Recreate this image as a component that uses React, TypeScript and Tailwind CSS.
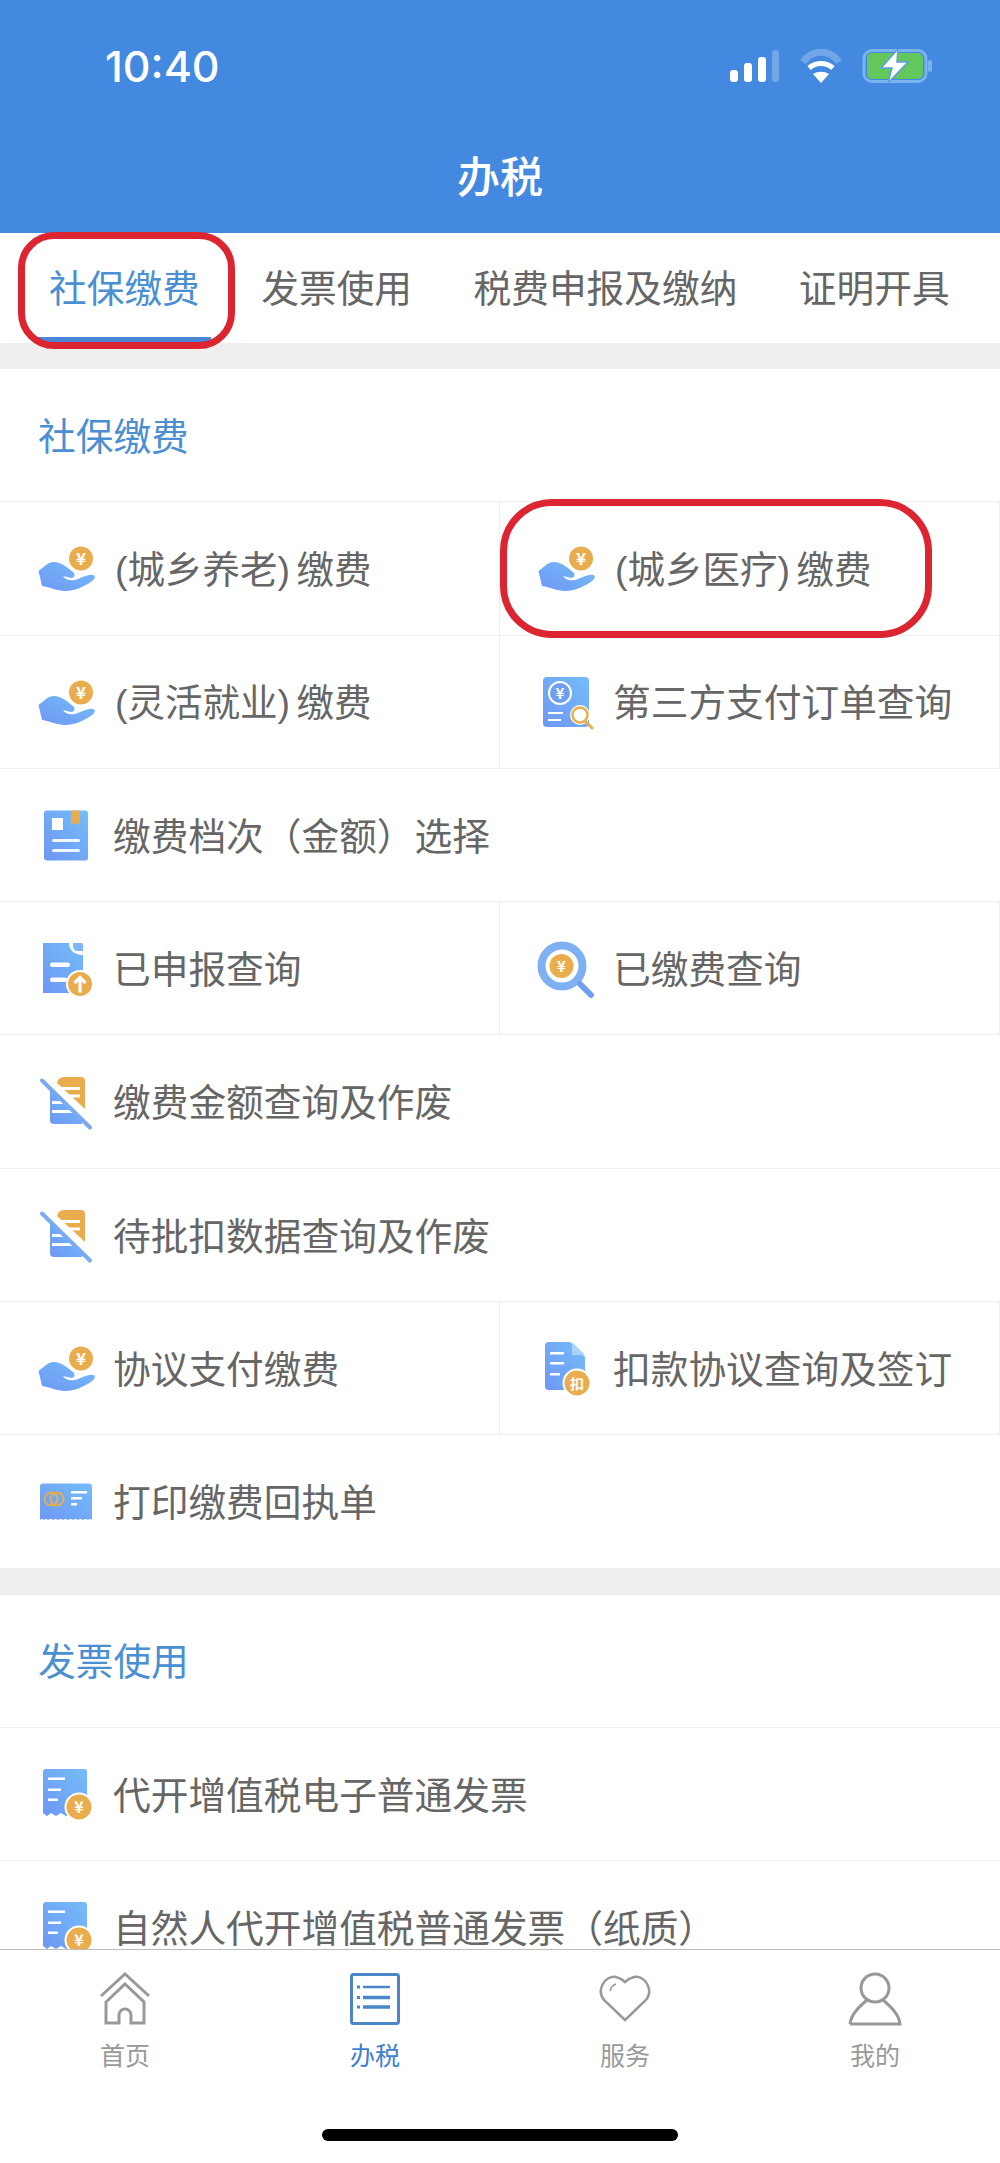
import type { ReactNode } from "react";

type IconName = "hand" | "form" | "thirdParty" | "upload" | "search" | "strike" | "deduct" | "ticket" | "receipt";

type Cell = { icon: IconName; label: string; circled?: boolean };

const TABS = ["社保缴费", "发票使用", "税费申报及缴纳", "证明开具"];

const SOCIAL_ROWS: Cell[][] = [
    [
        { icon: "hand", label: "(城乡养老) 缴费" },
        { icon: "hand", label: "(城乡医疗) 缴费", circled: true },
    ],
    [
        { icon: "hand", label: "(灵活就业) 缴费" },
        { icon: "thirdParty", label: "第三方支付订单查询" },
    ],
    [{ icon: "form", label: "缴费档次（金额）选择" }],
    [
        { icon: "upload", label: "已申报查询" },
        { icon: "search", label: "已缴费查询" },
    ],
    [{ icon: "strike", label: "缴费金额查询及作废" }],
    [{ icon: "strike", label: "待批扣数据查询及作废" }],
    [
        { icon: "hand", label: "协议支付缴费" },
        { icon: "deduct", label: "扣款协议查询及签订" },
    ],
    [{ icon: "ticket", label: "打印缴费回执单" }],
];

const INVOICE_ROWS: Cell[][] = [
    [{ icon: "receipt", label: "代开增值税电子普通发票" }],
    [{ icon: "receipt", label: "自然人代开增值税普通发票（纸质）" }],
];

const BLUE_FILL = "url(#serviceBlue)";
const ORANGE = "#e9ad4e";

function ServiceIcon({ name }: { name: IconName }) {
    let body: ReactNode = null;

    if (name === "hand") {
        body = (
            <>
                <circle cx="45" cy="20.5" r="12" fill={ORANGE} />
                <text x="45" y="26.5" textAnchor="middle" fontSize="17" fontWeight="700" fill="#fff">¥</text>
                <path
                    d="M2.5 33 C8 29 12 24 18 24 C25 24 32 30 37 34 C40 37 38 40 35 40 L27 38 C30 43 37 43 42 41 C47 39 53 36 57 37 C60 38 59 41 56 43 C48 49 38 53 29 53 C21 53 14 49 6 48 Z"
                    fill={BLUE_FILL}
                />
            </>
        );
    } else if (name === "form") {
        body = (
            <>
                <rect x="8" y="5.5" width="44" height="50" rx="3" fill={BLUE_FILL} />
                <path d="M35 5.5 H44 V20 L39.5 18 L35 20 Z" fill={ORANGE} />
                <rect x="16" y="13" width="11" height="12" fill="#fff" />
                <rect x="16" y="34" width="28" height="3" rx="1.5" fill="#fff" opacity="0.9" />
                <rect x="16" y="44" width="28" height="3" rx="1.5" fill="#fff" opacity="0.9" />
            </>
        );
    } else if (name === "thirdParty") {
        body = (
            <>
                <rect x="7" y="5" width="46" height="50" rx="4" fill={BLUE_FILL} />
                <circle cx="24" cy="21" r="11" fill="#6f9ff0" stroke="#fff" strokeWidth="2" />
                <text x="24" y="27" textAnchor="middle" fontSize="15" fontWeight="700" fill="#fff">¥</text>
                <rect x="12" y="40" width="15" height="2" fill="#fff" />
                <rect x="12" y="47" width="13" height="2" fill="#fff" />
                <circle cx="44" cy="43" r="10" fill="#fff" />
                <circle cx="44" cy="43" r="7.5" fill="#fff" stroke={ORANGE} strokeWidth="2.5" />
                <path d="M49 49 L56 56" stroke={ORANGE} strokeWidth="3" strokeLinecap="round" />
            </>
        );
    } else if (name === "upload") {
        body = (
            <>
                <path d="M7 5 H33 C33 12 38 17 47 17 V55 H7 Z" fill={BLUE_FILL} />
                <path d="M37 5 H45 Q47 5 47 7 V13 H42 Q37 13 37 8 Z" fill="#7fb6f8" />
                <rect x="14" y="24.5" width="20" height="4.5" rx="2.2" fill="#fff" />
                <rect x="14" y="39.5" width="17" height="4.5" rx="2.2" fill="#fff" />
                <circle cx="44" cy="46" r="14" fill="#fff" />
                <circle cx="44" cy="46" r="12" fill={ORANGE} />
                <path d="M44 54.5 V40 M38.5 45 L44 39.5 L49.5 45" stroke="#fff" strokeWidth="3.2" fill="none" />
            </>
        );
    } else if (name === "search") {
        body = (
            <>
                <circle cx="26" cy="28" r="20.5" fill="#fff" stroke="#7fb0f2" strokeWidth="8" />
                <circle cx="25.5" cy="28" r="12" fill={ORANGE} />
                <text x="25.5" y="34" textAnchor="middle" fontSize="15" fontWeight="700" fill="#fff">¥</text>
                <path d="M44 46 L55 57" stroke="#6f9ff0" strokeWidth="6" strokeLinecap="round" />
            </>
        );
    } else if (name === "strike") {
        body = (
            <>
                {/* upper half of the sheet, split off by the crossing line */}
                <path d="M21 11 Q22 5 28 5 H45 Q49 5 49 9 V37 Z" fill={ORANGE} />
                <rect x="20" y="15" width="24" height="3" fill="#fff" />
                <rect x="28" y="22.5" width="16" height="3" fill="#fff" />
                {/* lower half */}
                <path d="M14 16 L46 47 V52 H18 Q14 52 14 48 Z" fill={BLUE_FILL} />
                <rect x="16" y="29" width="18" height="3" fill="#fff" />
                <rect x="16" y="38" width="28" height="3" fill="#fff" />
                <path d="M6 8.5 L54 55.5" stroke="#7aaaf5" strokeWidth="4" strokeLinecap="round" />
            </>
        );
    } else if (name === "deduct") {
        body = (
            <>
                <path d="M13 4 H34 L49 19 V49 Q49 52 46 52 H13 Q9 52 9 48 V8 Q9 4 13 4 Z" fill={BLUE_FILL} />
                <path d="M36 4 L49 17 H36 Z" fill="#a9d3fb" />
                <rect x="14" y="14" width="14" height="2.5" fill="#fff" />
                <rect x="14" y="24" width="14" height="2.5" fill="#fff" />
                <rect x="14" y="35" width="10" height="2.5" fill="#fff" />
                <circle cx="41" cy="45" r="14.5" fill="#fff" />
                <circle cx="41" cy="45" r="12.5" fill={ORANGE} />
                <text x="41" y="50.5" textAnchor="middle" fontSize="14" fontWeight="700" fill="#fff">扣</text>
            </>
        );
    } else if (name === "ticket") {
        body = (
            <>
                <path
                    d="M7 11.5 H53 Q56 11.5 56 14.5 V48 Q54 46 52 48 Q50 46 47 48 Q45 46 42 48 Q40 46 37 48 Q35 46 32 48 Q30 46 27 48 Q25 46 22 48 Q20 46 17 48 Q15 46 12 48 Q10 46 8 48 Q6 46 4 48 V14.5 Q4 11.5 7 11.5 Z"
                    fill={BLUE_FILL}
                />
                <circle cx="15" cy="27" r="6.5" fill="none" stroke={ORANGE} strokeWidth="2" />
                <circle cx="21" cy="27" r="6.5" fill="none" stroke={ORANGE} strokeWidth="2" />
                <rect x="35" y="19" width="16" height="2.5" fill="#fff" />
                <rect x="35" y="25" width="11" height="2.5" fill="#fff" />
                <rect x="35" y="31" width="6" height="2.5" fill="#fff" />
            </>
        );
    } else if (name === "receipt") {
        body = (
            <>
                <path
                    d="M10 5 H48 Q51 5 51 8 V48 L30 52 L25 49 L20 52 L15 49 L11 52 L7 49 V8 Q7 5 10 5 Z"
                    fill={BLUE_FILL}
                />
                <rect x="12" y="13.5" width="17" height="2.5" fill="#fff" />
                <rect x="12" y="24.5" width="13" height="2.5" fill="#fff" />
                <rect x="12" y="34.5" width="10" height="2.5" fill="#fff" />
                <circle cx="43" cy="43" r="14.5" fill="#fff" />
                <circle cx="43" cy="43" r="12.5" fill={ORANGE} />
                <text x="43" y="49" textAnchor="middle" fontSize="16" fontWeight="700" fill="#fff">¥</text>
            </>
        );
    }

    return (
        <svg width="60" height="60" viewBox="0 0 60 60" className="shrink-0 font-['Noto_Sans_CJK_SC',sans-serif]">
            {body}
        </svg>
    );
}

function ServiceCell({ cell, half }: { cell: Cell; half: boolean }) {
    // the latin brackets sit tighter in these labels
    const bracketed = cell.label.startsWith("(");

    return (
        <div className={`relative flex items-center gap-[17px] pl-9 ${half ? "w-1/2 border-r border-[#eeeeee]" : "w-full"}`}>
            <ServiceIcon name={cell.icon} />
            <span className={`whitespace-nowrap pt-[5px] leading-none text-[#666666] ${bracketed ? "ml-[2px] text-[37.5px] [word-spacing:-4px]" : "text-[37.7px]"}`}>
                {cell.label}
            </span>
            {cell.circled && (
                <div className="absolute inset-y-[-3px] left-0 right-[67px] rounded-[52px] border-[7px] border-[#dc2530]" />
            )}
        </div>
    );
}

function Section({ title, rows }: { title: string; rows: Cell[][] }) {
    return (
        <section className="bg-white">
            <div className="flex h-[133.3px] items-center border-b border-[#eeeeee] pl-[38px] pt-[5px] text-[37.7px] leading-none text-[#4a8fd2]">
                {title}
            </div>
            {rows.map((row) => (
                <div key={row[0].label} className="flex h-[133.3px] border-b border-[#eeeeee]">
                    {row.map((cell) => (
                        <ServiceCell key={cell.label} cell={cell} half={row.length > 1} />
                    ))}
                </div>
            ))}
        </section>
    );
}

function StatusIcons() {
    return (
        <div className="flex items-center">
            <svg width="49" height="32" viewBox="0 0 49 32" className="mr-[21px]">
                <rect x="0" y="20" width="8" height="12" rx="3" fill="#fff" />
                <rect x="14" y="13" width="8" height="19" rx="3" fill="#fff" />
                <rect x="28" y="7" width="8" height="25" rx="3" fill="#fff" />
                <rect x="42" y="0" width="7" height="32" rx="3" fill="#fff" opacity="0.25" />
            </svg>
            <svg width="42" height="34" viewBox="0 0 42 34" className="mr-5">
                <path d="M3 13 C12 0 30 0 39 13" stroke="#fff" strokeWidth="7" fill="none" opacity="0.25" />
                <path d="M9 19 C16 13 26 13 33 19" stroke="#fff" strokeWidth="5" fill="none" />
                <path d="M13 25 C18 22 24 22 29 25 L21 34 Z" fill="#fff" />
            </svg>
            <svg width="70" height="34" viewBox="0 0 70 34">
                <rect x="2" y="1.5" width="62" height="31" rx="8" fill="none" stroke="#7ab3ee" strokeWidth="3" />
                <rect x="5" y="4" width="56" height="26" rx="5" fill="#63c85c" />
                <rect x="66" y="11" width="4" height="12" rx="2" fill="#7ab3ee" />
                <path d="M36 0 L19 19 H30 L26 34 L46 13 H35 Z" fill="#fff" stroke="#5a9ee5" strokeWidth="1.5" />
            </svg>
        </div>
    );
}

function TabIcon({ name }: { name: string }) {
    if (name === "首页") {
        return (
            <svg width="52" height="54" viewBox="0 0 52 54" fill="none" stroke="#999999" strokeWidth="3">
                <path d="M2 24 L26 2 L50 24" />
                <path d="M7 30 L26 12 L45 30 V51 H32 V43 A6 6 0 0 0 20 43 V51 H7 Z" />
            </svg>
        );
    }
    if (name === "办税") {
        return (
            <svg width="52" height="54" viewBox="0 0 52 54" fill="none" stroke="#4a86c8">
                <rect x="2.5" y="2.5" width="47" height="49" rx="2" strokeWidth="3" />
                <path d="M14 15 H41" strokeWidth="2.5" />
                <path d="M14 25.5 H41" strokeWidth="3.5" />
                <path d="M14 35 H41" strokeWidth="3.5" />
                <path d="M8 15 H11 M8 25.5 H11 M8 35 H11" strokeWidth="3" />
            </svg>
        );
    }
    if (name === "服务") {
        return (
            <svg width="54" height="54" viewBox="0 0 54 54" fill="none" stroke="#999999" strokeWidth="2.5">
                <path d="M27 48 L6 28 C-2 18 7 3 18 5 C22 6 25 8 27 10 C29 8 32 6 36 5 C47 3 56 18 48 28 Z" />
                <path d="M12 19 C13 15 15 13 18 12" strokeWidth="1.5" />
            </svg>
        );
    }
    return (
        <svg width="54" height="54" viewBox="0 0 54 54" fill="none" stroke="#999999" strokeWidth="3">
            <circle cx="27" cy="16" r="14" />
            <path d="M2 52 C3 42 12 34 19 28 M35 28 C42 34 51 42 52 52 H2" />
        </svg>
    );
}

function TabBar() {
    const items = ["首页", "办税", "服务", "我的"];

    return (
        <nav className="relative h-[214px] shrink-0 border-t border-[#bbbbbb] bg-white">
            <div className="grid grid-cols-4 pt-[22px]">
                {items.map((item) => (
                    <div key={item} className="flex flex-col items-center gap-[18px]">
                        <TabIcon name={item} />
                        <span className={`text-[25px] leading-[25px] ${item === "办税" ? "text-[#3f7fd0]" : "text-[#999999]"}`}>{item}</span>
                    </div>
                ))}
            </div>
            <div className="absolute bottom-[22px] left-[322px] h-3 w-[356px] rounded-full bg-black" />
        </nav>
    );
}

export default function App() {
    return (
        <div className="flex h-[2163px] w-[1000px] flex-col overflow-hidden bg-white font-['Liberation_Sans','Noto_Sans_CJK_SC',sans-serif]">
            {/* shared fill for the service icons */}
            <svg width="0" height="0" className="absolute">
                <defs>
                    <linearGradient id="serviceBlue" x1="1" y1="0" x2="0" y2="1">
                        <stop offset="0" stopColor="#74bdf9" />
                        <stop offset="1" stopColor="#6e97f3" />
                    </linearGradient>
                </defs>
            </svg>

            <header className="h-[233px] shrink-0 bg-[#4389e0] text-white">
                <div className="flex h-[132px] items-center justify-between pl-[105px] pr-[68px]">
                    <span className="font-['Inter',sans-serif] text-[43px] font-medium leading-none">10:40</span>
                    <StatusIcons />
                </div>
                <div className="pt-px text-center text-[43px] font-medium leading-[90px]">办税</div>
            </header>

            <div className="flex h-[110px] shrink-0 gap-[39.5px] bg-white pl-[38px] text-[37.7px] leading-none text-[#666666]">
                {TABS.map((tab, i) => (
                    <div
                        key={tab}
                        className={`relative flex items-center whitespace-nowrap px-[11px] pt-1 ${i === 0 ? "border-b-[6px] border-[#4a86d6] text-[#4a8fd2]" : ""}`}
                    >
                        <span className={i === 0 ? "pt-[6px]" : ""}>{tab}</span>
                        {i === 0 && (
                            <div className="absolute -bottom-[12px] -left-[20px] -right-[24px] -top-px rounded-[36px] border-[7px] border-[#dc2530]" />
                        )}
                    </div>
                ))}
            </div>

            <main className="min-h-0 flex-1 overflow-hidden bg-[#eeeeee] pt-[26px]">
                <Section title="社保缴费" rows={SOCIAL_ROWS} />
                <div className="mt-[26px]">
                    <Section title="发票使用" rows={INVOICE_ROWS} />
                </div>
            </main>

            <TabBar />
        </div>
    );
}
